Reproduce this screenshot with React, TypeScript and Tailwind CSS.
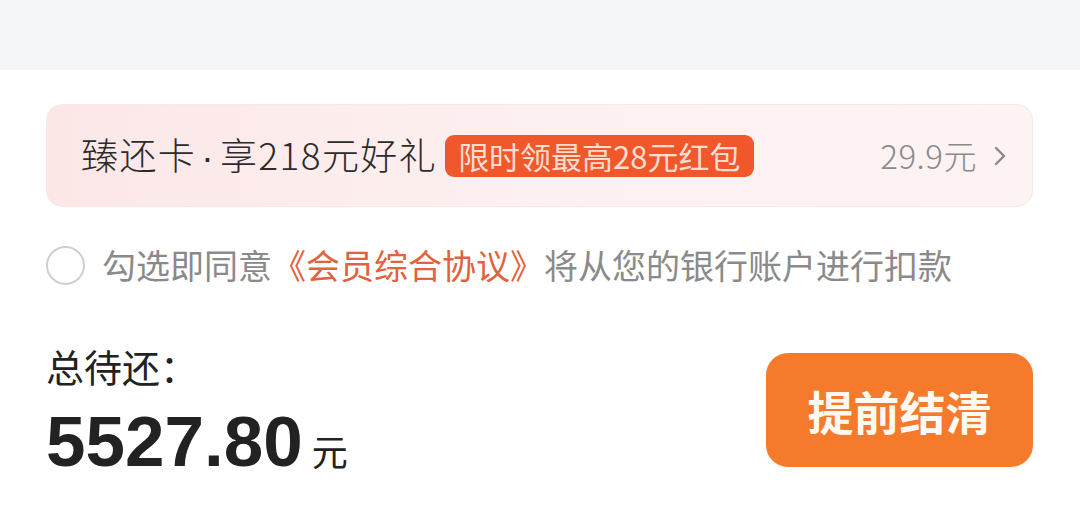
import React from "react";

export default function App() {
  const cjk = { fontFamily: '"Noto Sans CJK SC", "Noto Sans", sans-serif' };
  return (
    <div className="w-[1080px] h-[517px] bg-white overflow-hidden" style={cjk}>
      <div className="h-[70px] bg-[#f4f5f7]" />
      <div className="pl-[46px] pr-[47px]">
        <div className="mt-[34px] h-[103px] rounded-[16px] flex items-center pl-[34px] pr-[25px] bg-gradient-to-r from-[#fce7e7] via-[#fdf0f0] to-[#fdf3f3] border border-[#f9e8e8]">
          <span className="text-[37px] leading-none text-[#2b2b2b] whitespace-nowrap tracking-[1.4px] font-light">
            臻还卡
            <span className="px-[5px]" style={{ fontFamily: '"Liberation Sans", Arial, sans-serif' }}>·</span>
            享218元好礼
          </span>
          <span className="ml-[8px] h-[42px] flex items-center px-[13px] rounded-[9px] bg-[#f0582c] text-[#ffdccf] text-[31px] leading-none whitespace-nowrap">
            限时领最高28元红包
          </span>
          <div className="ml-auto flex items-center text-[#8a8a8a]">
            <span className="text-[33px] leading-none whitespace-nowrap font-light tracking-[0.5px]">29.9元</span>
            <svg width="14" height="22" viewBox="0 0 14 22" className="ml-[16px]">
              <path d="M3 3 L11 11 L3 19" fill="none" stroke="#8a8a8a" strokeWidth="2.4" strokeLinecap="round" strokeLinejoin="round" />
            </svg>
          </div>
        </div>

        <div className="mt-[38px] h-[40px] flex items-center">
          <div className="w-[39px] h-[39px] rounded-full border-[2px] border-[#cfcfcf] shrink-0" />
          <p className="ml-[17px] text-[34px] leading-none text-[#8a8a8a] whitespace-nowrap">
            勾选即同意<span className="text-[#e2623b]">《会员综合协议》</span>将从您的银行账户进行扣款
          </p>
        </div>

        <div className="mt-[68px] h-[114px] flex items-center justify-between">
          <div className="flex flex-col">
            <span className="text-[38px] leading-[44px] text-[#222]">总待还：</span>
            <div className="mt-[19px] flex items-baseline">
              <span
                className="text-[71px] leading-[70px] font-bold text-[#222]"
                style={{ fontFamily: '"Liberation Sans", Arial, sans-serif' }}
              >
                5527.80
              </span>
              <span className="ml-[9px] text-[36px] leading-none text-[#222]">元</span>
            </div>
          </div>
          <button className="w-[267px] h-[114px] rounded-[22px] bg-[#f67a2b] text-[#fff9f2] text-[46px] font-bold flex items-center justify-center">
            提前结清
          </button>
        </div>
      </div>
    </div>
  );
}
